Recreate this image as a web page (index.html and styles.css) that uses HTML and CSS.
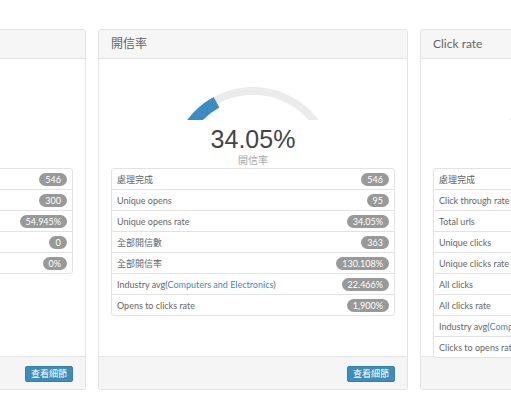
FILE: index.html
```html
<!DOCTYPE html>
<html lang="zh-Hant">
<head>
    <meta charset="UTF-8">
    <meta name="viewport" content="width=device-width, initial-scale=1.0">
    <title>報表</title>
    <link rel="stylesheet" href="styles.css">
</head>
<body>
    <section class="stats">
        <!--送達-->
        <article class="card">
            <header class="card-header">送達率</header>
            <div class="card-body">
                <div class="gauge">
                    <svg width="174" height="34" viewBox="0 0 174 34">
                        <path class="gauge-track" d="M9 83 A78 78 0 0 1 165 83" />
                        <path class="gauge-value" d="M11 83 A76 76 0 0 1 98.7 7.9" />
                    </svg>
                    <div class="gauge-number">54.95%</div>
                    <div class="gauge-label">送達率</div>
                </div>
                <ul class="list">
                    <li><span>處理完成</span><span class="badge">546</span></li>
                    <li><span>成功送達</span><span class="badge">300</span></li>
                    <li><span>送達率</span><span class="badge">54.945%</span></li>
                    <li><span>退信</span><span class="badge">0</span></li>
                    <li><span>退信率</span><span class="badge">0%</span></li>
                </ul>
            </div>
            <footer class="card-footer"><a href="#" class="btn">查看細節</a></footer>
        </article>

        <!--開信-->
        <article class="card">
            <header class="card-header">開信率</header>
            <div class="card-body">
                <div class="gauge">
                    <svg width="174" height="34" viewBox="0 0 174 34">
                        <path class="gauge-track" d="M9 83 A78 78 0 0 1 165 83" />
                        <path class="gauge-value" d="M11 83 A76 76 0 0 1 50.5 16.3" />
                    </svg>
                    <div class="gauge-number">34.05%</div>
                    <div class="gauge-label">開信率</div>
                </div>
                <ul class="list">
                    <li><span>處理完成</span><span class="badge">546</span></li>
                    <li><span>Unique opens</span><span class="badge">95</span></li>
                    <li><span>Unique opens rate</span><span class="badge">34.05%</span></li>
                    <li><span>全部開信數</span><span class="badge">363</span></li>
                    <li><span>全部開信率</span><span class="badge">130.108%</span></li>
                    <li><span>Industry avg(<a href="#">Computers and Electronics</a>)</span><span class="badge">22.466%</span></li>
                    <li><span>Opens to clicks rate</span><span class="badge">1,900%</span></li>
                </ul>
            </div>
            <footer class="card-footer"><a href="#" class="btn">查看細節</a></footer>
        </article>

        <!--點擊-->
        <article class="card">
            <header class="card-header">Click rate</header>
            <div class="card-body">
                <div class="gauge">
                    <svg width="174" height="34" viewBox="0 0 174 34">
                        <path class="gauge-track" d="M9 83 A78 78 0 0 1 165 83" />
                        <path class="gauge-value" d="M11 83 A76 76 0 0 1 18.4 50.2" />
                    </svg>
                    <div class="gauge-number">17.4%</div>
                    <div class="gauge-label">Click rate</div>
                </div>
                <ul class="list">
                    <li><span>處理完成</span><span class="badge">546</span></li>
                    <li><span>Click through rate</span><span class="badge">17.4%</span></li>
                    <li><span>Total urls</span><span class="badge">4</span></li>
                    <li><span>Unique clicks</span><span class="badge">95</span></li>
                    <li><span>Unique clicks rate</span><span class="badge">17.4%</span></li>
                    <li><span>All clicks</span><span class="badge">1805</span></li>
                    <li><span>All clicks rate</span><span class="badge">330.586%</span></li>
                    <li><span>Industry avg(<a href="#">Computers and Electronics</a>)</span><span class="badge">2.356%</span></li>
                    <li><span>Clicks to opens rate</span><span class="badge">100%</span></li>
                </ul>
            </div>
            <footer class="card-footer"><a href="#" class="btn">查看細節</a></footer>
        </article>
    </section>
</body>
</html>
```

FILE: styles.css
```css
html{
    box-sizing: border-box;
    font-family: Lato, "Noto Sans CJK TC", sans-serif;
    font-size: 9px;
    color: #555;
}
*,
*::before,
*::after{
    box-sizing: inherit;
}

body{
    margin: 0;
    background-color: #fff;
    overflow: hidden;
}

/*las tarjetas estan cortadas a los lados*/
.stats{
    display: flex;
    gap: 12px;
    padding-top: 29px;
    margin-left: -224px;
}

.card{
    flex: 0 0 310px;
    height: 361px;
    display: flex;
    flex-direction: column;
    border: 1px solid #e4e4e4;
    border-radius: 3px;
    background-color: #fff;
    box-shadow: 0 1px 1px rgba(0,0,0,.03);
}
.card-header{
    height: 29px;
    line-height: 28px;
    padding: 0 12px;
    font-size: 12px;
    color: #666;
    background-color: #f6f6f6;
    border-bottom: 1px solid #e4e4e4;
    border-radius: 3px 3px 0 0;
}
.card-body{
    flex: 1 1 0;
    min-height: 0;
    padding: 27px 12px 0;
}
.card-footer{
    height: 33px;
    padding: 9px 12px 0;
    display: flex;
    justify-content: flex-end;
    align-items: flex-start;
    background-color: #f5f5f5;
    border-top: 1px solid #e4e4e4;
    border-radius: 0 0 3px 3px;
}

.gauge{
    text-align: center;
}
.gauge svg{
    display: block;
    margin: 0 auto;
}
.gauge-track{
    fill: none;
    stroke: #ebebeb;
    stroke-width: 8;
}
.gauge-value{
    fill: none;
    stroke: #3a8cc1;
    stroke-width: 12;
}
.gauge-number{
    margin-top: 4px;
    line-height: 30px;
    font-family: "Liberation Sans", Arial, sans-serif;
    font-size: 25px;
    color: #444;
}
.gauge-label{
    line-height: 12px;
    font-size: 10px;
    color: #aaa;
}

.list{
    list-style: none;
    margin: 2px 0 0;
    padding: 0;
}
.list li{
    position: relative;
    display: flex;
    justify-content: space-between;
    align-items: center;
    height: 22px;
    padding: 0 5px 0 5px;
    background-color: #fff;
    border: 1px solid #e2e2e2;
    margin-bottom: -1px;
    color: #666;
    white-space: nowrap;
}
.list li:first-child{
    border-radius: 3px 3px 0 0;
}
.list li:last-child{
    border-radius: 0 0 3px 3px;
}
.list a{
    color: #3c8dbc;
    text-decoration: none;
}

.badge{
    display: inline-block;
    min-width: 18px;
    padding: 0 6px;
    line-height: 13px;
    font-size: 9px;
    text-align: center;
    color: #fff;
    background-color: #999;
    border-radius: 7px;
}

.btn{
    display: inline-block;
    height: 16px;
    line-height: 14px;
    padding: 0 5px;
    font-size: 9px;
    color: #fff;
    text-decoration: none;
    background-color: #3c8dbc;
    border: 1px solid #367fa9;
    border-radius: 2px;
}
```
